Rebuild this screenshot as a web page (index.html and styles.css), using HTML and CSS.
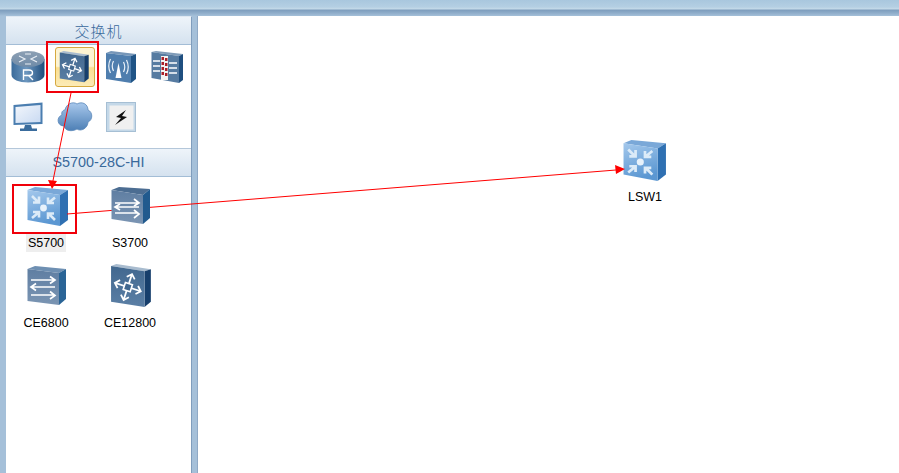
FILE: index.html
```html
<!DOCTYPE html>
<html lang="en">
<head>
  <meta charset="UTF-8">
  <title>eNSP</title>
  <link rel="stylesheet" href="styles.css">
</head>
<body>
  <!-- shared drawings for the device icons -->
  <svg class="defs" width="0" height="0">
    <defs>
      <linearGradient id="blueFront" x1="0" y1="0" x2="0.3" y2="1">
        <stop offset="0" stop-color="#a4c8ec"/>
        <stop offset="1" stop-color="#5b97d2"/>
      </linearGradient>
      <linearGradient id="slateFront" x1="0" y1="0" x2="0" y2="1">
        <stop offset="0" stop-color="#5f7ea2"/>
        <stop offset="1" stop-color="#7b95b3"/>
      </linearGradient>
      <linearGradient id="darkFront" x1="0" y1="0" x2="0" y2="1">
        <stop offset="0" stop-color="#42688f"/>
        <stop offset="1" stop-color="#5b7fa5"/>
      </linearGradient>
      <linearGradient id="routerSide" x1="0" y1="0" x2="1" y2="0">
        <stop offset="0" stop-color="#3a6b9b"/>
        <stop offset="0.45" stop-color="#6d97bf"/>
        <stop offset="1" stop-color="#1f4d7c"/>
      </linearGradient>
      <linearGradient id="routerTop" x1="0" y1="0" x2="0" y2="1">
        <stop offset="0" stop-color="#8da0b4"/>
        <stop offset="1" stop-color="#6f8ba8"/>
      </linearGradient>
      <linearGradient id="screen" x1="0" y1="0" x2="1" y2="1">
        <stop offset="0" stop-color="#f2f6fc"/>
        <stop offset="1" stop-color="#c9daf2"/>
      </linearGradient>
      <linearGradient id="cloud" x1="0" y1="0" x2="0" y2="1">
        <stop offset="0" stop-color="#a8c8ec"/>
        <stop offset="1" stop-color="#4d7fb5"/>
      </linearGradient>
    </defs>

    <symbol id="core" viewBox="0 0 42 42">
      <path d="M0.500 4 L8 1 L41 4 L33 9 Z" fill="#7aa8d8"/>
      <path d="M33 9 L41 4 L41 34 L33 40 Z" fill="#2f70b2"/>
      <path d="M0.500 4 L33 9 L33 40 L0.500 34 Z" fill="url(#blueFront)"/>
      <circle cx="16.500" cy="22" r="3.400" fill="#e8f2fb"/>
      <g fill="none" stroke="#dcebf8" stroke-width="2.600">
        <path d="M5 10 L11 16 M12 10.500 V16.500 H6"/>
        <path d="M28 11.500 L22 16.500 M21 11.500 V17 H27"/>
        <path d="M5 32 L11 27 M6 26 H12 V31.500"/>
        <path d="M28 34 L22 28 M21 33 V27.500 H27"/>
      </g>
    </symbol>

    <symbol id="access" viewBox="0 0 42 42">
      <path d="M0.500 4 L8 1 L39 3 L32 9 Z" fill="#4c6d92"/>
      <path d="M32 9 L39 3 L39 32 L32 38 Z" fill="#215a8e"/>
      <path d="M0.500 4 L32 9 L32 38 L0.500 33 Z" fill="url(#slateFront)"/>
      <g fill="none" stroke="#fff" stroke-width="1.700">
        <path d="M4 17 H27 M23 13 L28 17 L23 20"/>
        <path d="M28 21 H5 M9 18 L4 21 L9 24"/>
        <path d="M4 27 H27 M23 24 L28 28 L23 32"/>
      </g>
    </symbol>

    <symbol id="fabric" viewBox="0 0 42 42">
      <path d="M0.500 3 L8 0 L39 3 L32 7 Z" fill="#6e8fb2"/>
      <path d="M32 7 L39 3 L39 33 L32 39 Z" fill="#2a6496"/>
      <path d="M0.500 3 L32 7 L32 39 L0.500 35 Z" fill="url(#slateFront)"/>
      <g fill="none" stroke="#fff" stroke-width="1.700">
        <path d="M4 14 H27 M23 10.500 L28 14 L23 17.500"/>
        <path d="M28 21 H5 M9 17.500 L4 21 L9 24.500"/>
        <path d="M4 29 H27 M23 25.500 L28 29.500 L23 33"/>
      </g>
    </symbol>

    <symbol id="router-switch" viewBox="0 0 42 42">
      <path d="M1 2 L6 0 L39 5 L33 7 Z" fill="#a9bccf"/>
      <path d="M33 7 L39 5 L39 36 L33 41 Z" fill="#173f6c"/>
      <path d="M1 2 L33 7 L33 41 L1 36 Z" fill="url(#darkFront)"/>
      <g fill="none" stroke="#fff" stroke-width="1.700" transform="rotate(18 17 22)">
        <path d="M17 9 V35 M13 13 L17 9 L21 13 M13 31 L17 35 L21 31"/>
        <path d="M4 22 H30 M8 18 L4 22 L8 26 M26 18 L30 22 L26 26"/>
      </g>
      <rect x="13.500" y="18.500" width="7" height="7" fill="#42688f" stroke="#fff" stroke-width="1.500" transform="rotate(18 17 22)"/>
    </symbol>

    <symbol id="router" viewBox="0 0 34 32">
      <path d="M0.500 8 V24 C0.500 28.500 8 31.500 17 31.500 C26 31.500 33.500 28.500 33.500 24 V8 Z" fill="url(#routerSide)"/>
      <ellipse cx="17" cy="8" rx="16.500" ry="8" fill="url(#routerTop)"/>
      <g fill="none" stroke="#e8eef4" stroke-width="1.200">
        <path d="M8 5 L14 8 L8 11 M26 5 L20 8 L26 11"/>
        <path d="M14 3 H20 M14 13 H20"/>
      </g>
      <path d="M12.500 29 V19 H18 Q21.500 19 21.500 22 Q21.500 24.500 18 24.500 H12.500 M17.500 24.500 L22 29" fill="none" stroke="#fff" stroke-width="1.400"/>
    </symbol>

    <symbol id="wireless" viewBox="0 0 32 32">
      <path d="M1 2 L6 0 L31 3 L26 5 Z" fill="#7696b8"/>
      <path d="M26 5 L31 3 L31 28 L26 32 Z" fill="#1f5486"/>
      <path d="M1 2 L26 5 L26 32 L1 28 Z" fill="#4f7eae"/>
      <g fill="none" stroke="#e8f0f8" stroke-width="1.200">
        <path d="M8.500 10 Q6 15 8.500 20 M5.500 8 Q2 15 5.500 22"/>
        <path d="M18.500 11 Q21 16 18.500 21 M21.500 9 Q25 16 21.500 23"/>
      </g>
      <path d="M13.500 12 L16.500 27 H10.500 Z" fill="#fff"/>
    </symbol>

    <symbol id="firewall" viewBox="0 0 32 32">
      <path d="M0.500 1 L5 0 L32 3 L28 5 Z" fill="#7f9bb8"/>
      <path d="M28 5 L32 3 L32 29 L28 32 Z" fill="#1f4f80"/>
      <path d="M0.500 1 L28 5 L28 32 L0.500 27 Z" fill="#567ba1"/>
      <rect x="10" y="5" width="7" height="24" fill="#f2f2f2"/>
      <g fill="#a8202a">
        <rect x="10.500" y="6" width="2.500" height="3"/><rect x="14" y="7" width="2.500" height="3"/>
        <rect x="10.500" y="11" width="2.500" height="3"/><rect x="14" y="12" width="2.500" height="3"/>
        <rect x="10.500" y="16" width="2.500" height="3"/><rect x="14" y="17" width="2.500" height="3"/>
        <rect x="10.500" y="21" width="2.500" height="3"/><rect x="14" y="22" width="2.500" height="3"/>
      </g>
      <path d="M2 10 H9 M2 15 H9 M2 20 H9 M18 12 H26 M18 17 H26 M18 22 H26" stroke="#fff" stroke-width="1.300"/>
    </symbol>

    <symbol id="monitor" viewBox="0 0 30 30">
      <path d="M0.500 3 L29.500 0.500 V22 L0.500 23 Z" fill="#4b7eb0"/>
      <path d="M2.500 5 L27.500 3 V20 L2.500 21 Z" fill="url(#screen)"/>
      <path d="M12 23 H18 L19 26.500 H24 V29 H7 V26.500 H11 Z" fill="#3a6c9d"/>
    </symbol>

    <symbol id="cloud-net" viewBox="0 0 36 30">
      <path d="M8 8 C9 2 16 -1 20 2 C25 -1 31 2 31 8 C36 10 36 18 31 20 C31 26 24 30 20 27 C15 30 8 29 7 24 C0 24 -1 15 5 13 C4 10 6 8 8 8 Z" fill="url(#cloud)" stroke="#5b88ba" stroke-width="0.800"/>
    </symbol>

    <symbol id="link" viewBox="0 0 30 30">
      <rect x="0.500" y="0.500" width="29" height="29" fill="#c4d8e8" stroke="#a6bfd4"/>
      <rect x="3.500" y="3.500" width="24" height="24" fill="#f0f0f0"/>
      <path d="M20 8 L10 15 L15 16 L9 23 L21 15 L16 14 Z" fill="#111"/>
    </symbol>
  </svg>

  <div class="topbar"></div>

  <div class="workspace">
    <aside class="sidebar">
      <div class="panel-title cjk">交换机</div>
      <div class="type-grid">
        <div class="type-cell"><svg class="type-icon router-size"><use href="#router"/></svg></div>
        <div class="type-cell selected"><svg class="type-icon"><use href="#router-switch"/></svg></div>
        <div class="type-cell"><svg class="type-icon"><use href="#wireless"/></svg></div>
        <div class="type-cell"><svg class="type-icon"><use href="#firewall"/></svg></div>
        <div class="type-cell"><svg class="type-icon small"><use href="#monitor"/></svg></div>
        <div class="type-cell"><svg class="type-icon cloud-size"><use href="#cloud-net"/></svg></div>
        <div class="type-cell"><svg class="type-icon small"><use href="#link"/></svg></div>
      </div>

      <div class="panel-title">S5700-28C-HI</div>
      <div class="device-grid">
        <div class="device">
          <svg class="device-icon"><use href="#core"/></svg>
          <span class="device-name active">S5700</span>
        </div>
        <div class="device over-lines">
          <svg class="device-icon"><use href="#access"/></svg>
          <span class="device-name">S3700</span>
        </div>
        <div class="device">
          <svg class="device-icon"><use href="#fabric"/></svg>
          <span class="device-name">CE6800</span>
        </div>
        <div class="device">
          <svg class="device-icon tall"><use href="#router-switch"/></svg>
          <span class="device-name">CE12800</span>
        </div>
      </div>
    </aside>

    <main class="canvas">
      <div class="node">
        <svg class="node-icon"><use href="#core"/></svg>
        <span class="device-name">LSW1</span>
      </div>
    </main>
  </div>

  <!-- red annotations drawn over the screenshot -->
  <svg class="marks" width="899" height="473">
    <rect x="47" y="42" width="51" height="50" fill="none" stroke="#f0000a" stroke-width="2"/>
    <rect x="13" y="185" width="63" height="48" fill="none" stroke="#f0000a" stroke-width="2"/>
    <path d="M71 93 L52.500 183" stroke="#ff0000" fill="none"/>
    <path d="M52 189 L48 180 L57 181 Z" fill="#ff0000"/>
    <path d="M67 214 L616 170" stroke="#ff0000" fill="none"/>
    <path d="M625 169 L615 165 L616 174 Z" fill="#ff0000"/>
  </svg>
</body>
</html>
```

FILE: styles.css
```css
html, body {
  margin: 0;
  padding: 0;
}

body {
  position: relative;
  width: 899px;
  height: 473px;
  overflow: hidden;
  background: #a5c0d9;
  font-family: "Liberation Sans", Arial, sans-serif;
}

.defs {
  position: absolute;
}

.topbar {
  height: 16px;
  background: linear-gradient(to bottom, #a9c7de 0, #b4cfe3 7px, #c6dbe9 9px, #7d9dbd 10px, #8fadca 13px, #a5c0d9 16px);
}

.workspace {
  display: flex;
  gap: 5px;
  height: 457px;
  padding-left: 6px;
}

/* Left: device palette */
.sidebar {
  width: 185px;
  flex: none;
  background: #fff;
  border-top: 1px solid #dfe8f2;
  border-right: 1px solid #7f9dbd;
}

.panel-title {
  height: 27px;
  line-height: 27px;
  text-align: center;
  font-size: 14.400px;
  color: #39699b;
  background: linear-gradient(to bottom, #eef4fa, #d5e2ef);
  border-bottom: 1px solid #a3bdd6;
}

.panel-title.cjk {
  font-family: "Noto Sans CJK SC", sans-serif;
  font-size: 15px;
  font-weight: 300;
  letter-spacing: 1px;
}

.type-grid {
  display: grid;
  grid-template-columns: 42px 52px 40px 52px;
  grid-auto-rows: 40px;
  row-gap: 10px;
  padding: 2px 0 11px 1px;
  border-bottom: 1px solid #b4c7da;
}

.type-cell {
  display: flex;
  align-items: center;
  justify-content: center;
}

.type-cell.selected {
  box-sizing: border-box;
  width: 40px;
  height: 40px;
  margin-left: 6px;
  background: linear-gradient(to bottom, #fdf4d2 0, #fdf4d2 48%, #fbdf90 52%, #fcebb6 100%);
  border: 1px solid #d6a93f;
  border-radius: 3px;
}

.type-icon {
  width: 32px;
  height: 32px;
}

.type-icon.router-size {
  width: 34px;
}

.type-icon.small {
  width: 30px;
  height: 30px;
}

.type-icon.cloud-size {
  width: 36px;
  height: 30px;
}

.device-grid {
  display: grid;
  grid-template-columns: repeat(2, 78px);
  grid-auto-rows: 66px;
  gap: 14px 6px;
  padding: 9px 0 0 1px;
}

.device {
  display: flex;
  flex-direction: column;
  align-items: center;
}

.over-lines {
  position: relative;
  z-index: 2;
}

.device-icon {
  width: 42px;
  height: 42px;
  margin-left: 3px;
  flex: none;
}

.device-icon.tall {
  width: 44px;
  height: 44px;
  margin-top: -2px;
}

.device-name {
  margin-top: 6px;
  padding: 2px;
  font-size: 12.500px;
  line-height: 14px;
  color: #000;
}

.device-name.active {
  background: #eeeeee;
}

/* Right: topology canvas */
.canvas {
  position: relative;
  flex: 1;
  background: #fff;
  border-left: 1px solid #8fa9c6;
}

.node {
  position: absolute;
  left: 425px;
  top: 123px;
  display: flex;
  flex-direction: column;
  align-items: center;
}

.node-icon {
  width: 44px;
  height: 44px;
}

.node .device-name {
  margin-top: 5px;
}

.marks {
  position: absolute;
  left: 0;
  top: 0;
  z-index: 1;
  pointer-events: none;
}
```
